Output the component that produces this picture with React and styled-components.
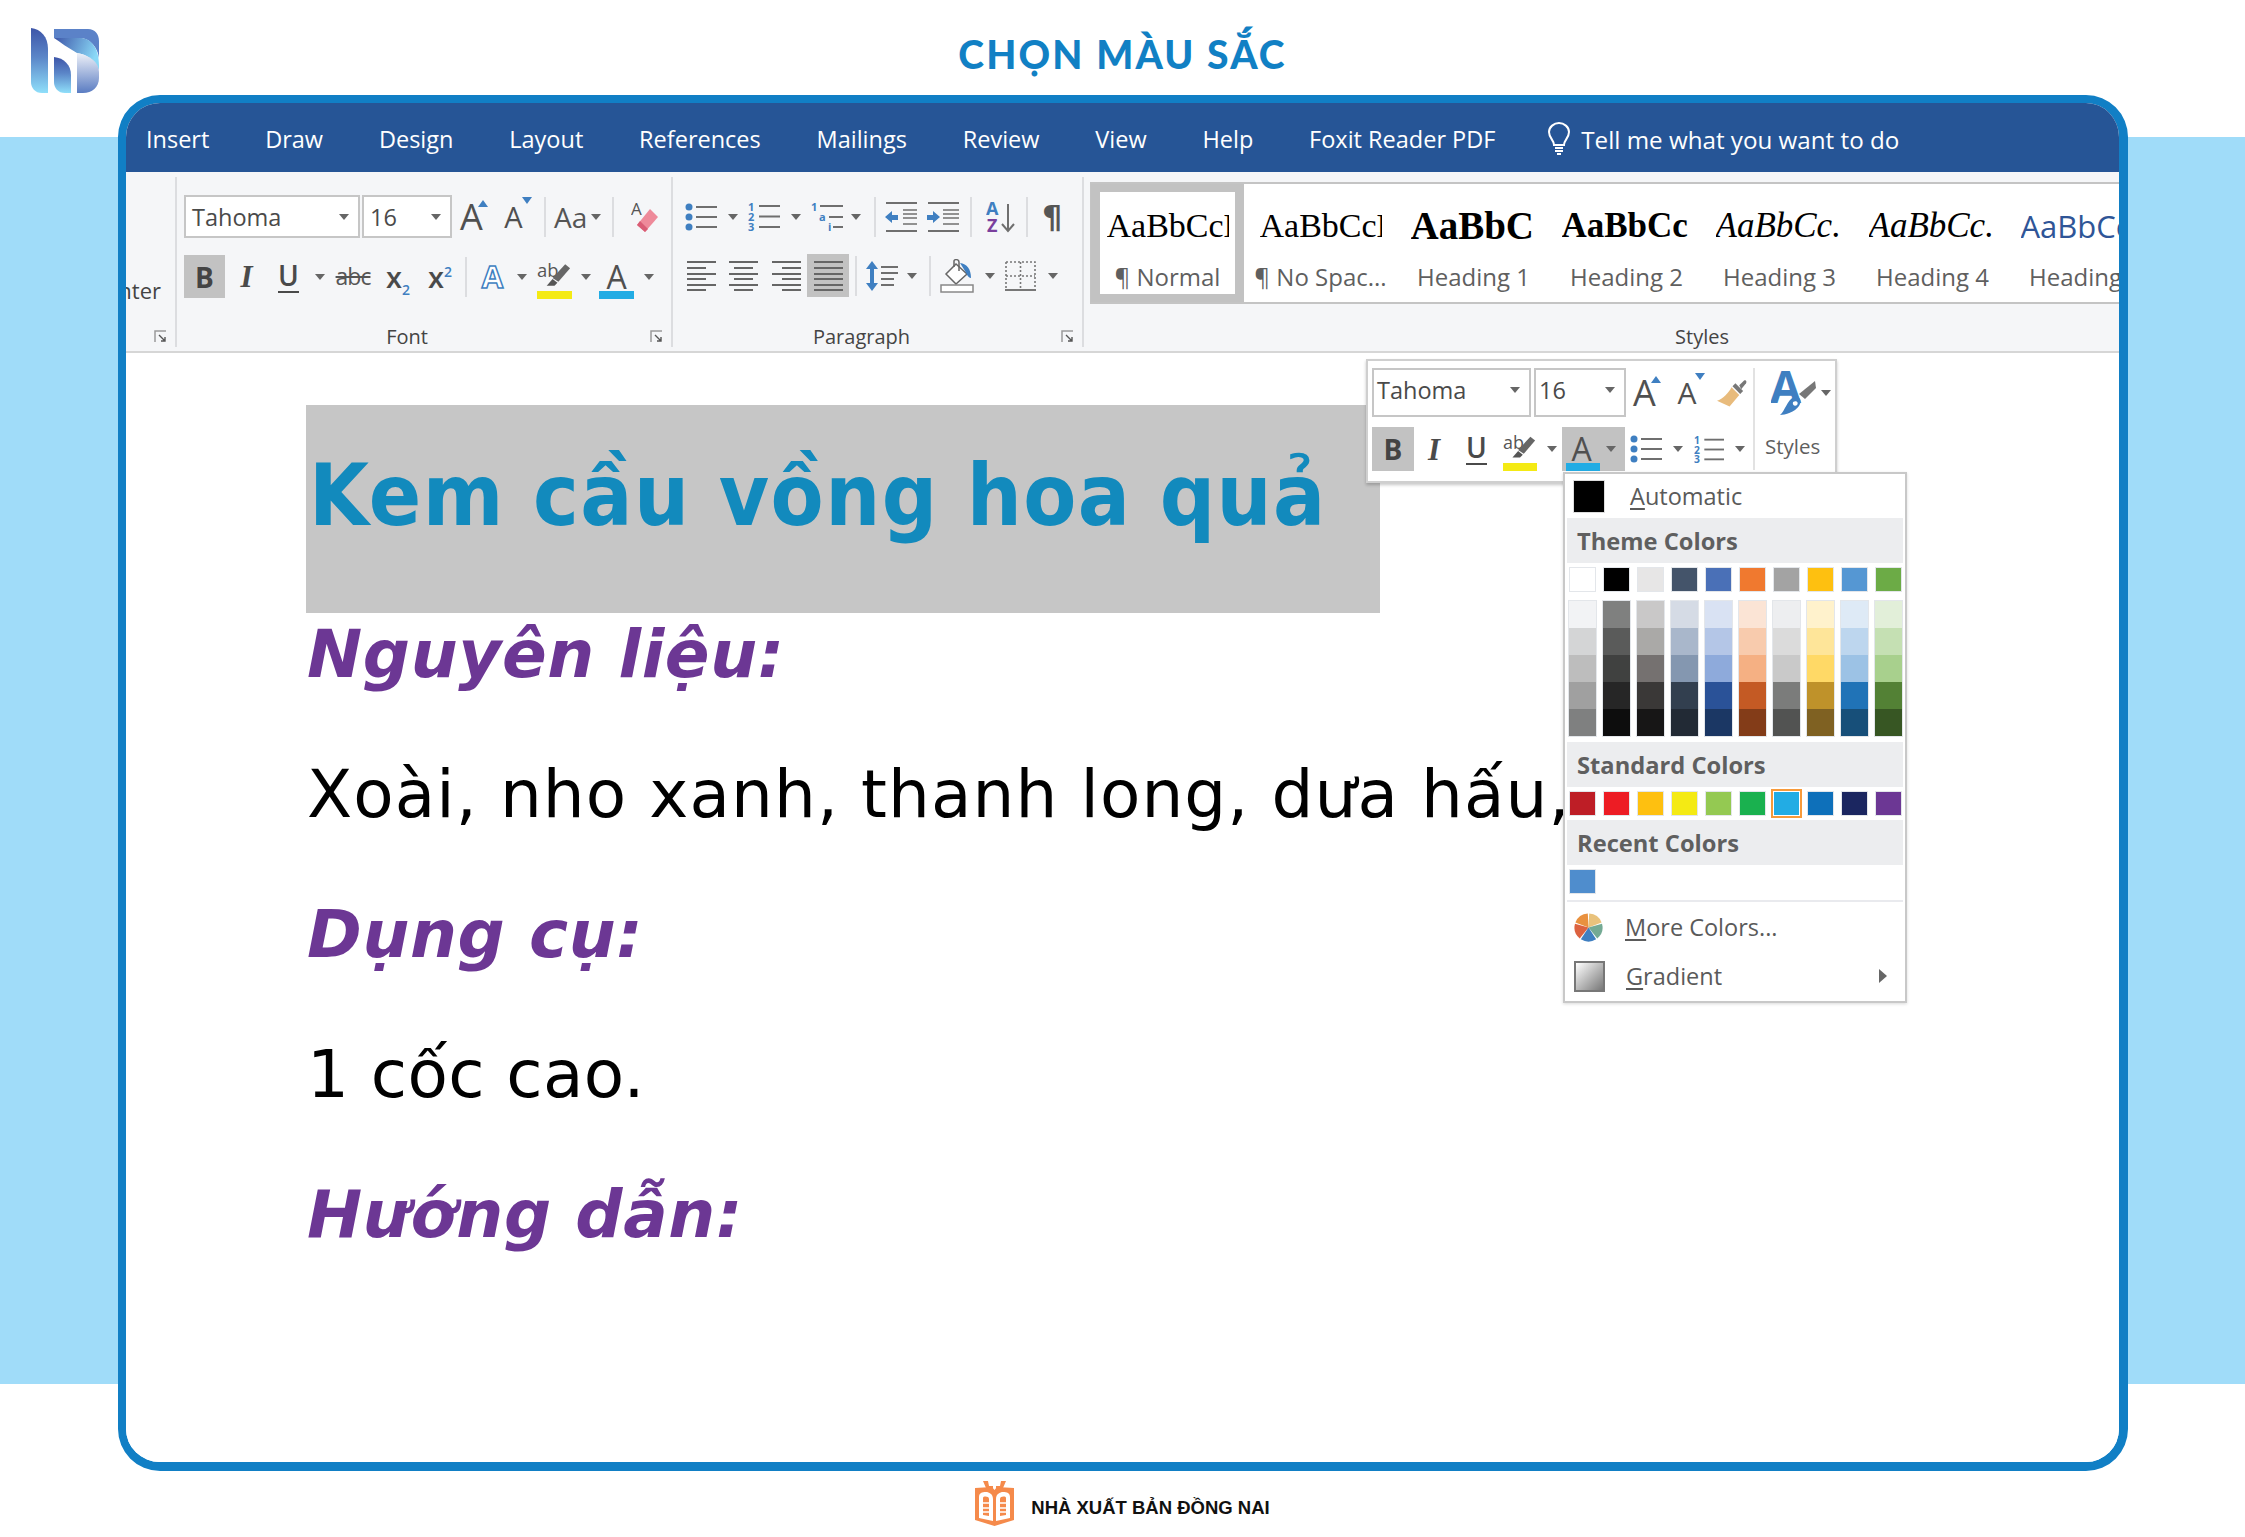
import React from "react"
import styled, { createGlobalStyle } from "styled-components"

const UI = '"Open Sans", "Noto Sans", sans-serif'
const DOC = '"DejaVu Sans", Tahoma, sans-serif'
const SERIF = '"Liberation Serif", serif'
const BLUE = "#3f7fc1"
const GREY = "#6f6f6f"

const Global = createGlobalStyle`
  html, body { margin: 0; padding: 0; background: #fff; }
  * { box-sizing: border-box; }
`

const Page = styled.div`
  width: 2245px;
  height: 1537px;
  overflow: hidden;
  font-family: ${UI};
  background: linear-gradient(#a0dcf9, #a0dcf9) 0 137px / 100% 1247px no-repeat #fff;
`
const Header = styled.header`
  height: 95px;
  display: grid;
  grid-template-columns: 1fr auto 1fr;
`
const LogoWrap = styled.div`
  padding: 28px 0 0 30px;
`
const PageTitle = styled.h1`
  margin: 27px 0 0;
  font: 900 39px/54px Lato, "Noto Sans", sans-serif;
  letter-spacing: 2.2px;
  color: #1180c4;
  white-space: nowrap;
`
const Frame = styled.main`
  margin-left: 118px;
  width: 2010px;
  height: 1376px;
  border: solid #117fc5;
  border-width: 8px 9px 9px 8px;
  border-radius: 42px;
  overflow: hidden;
  background: #fff;
  display: flex;
  flex-direction: column;
`
const Footer = styled.footer`
  height: 66px;
  display: flex;
  justify-content: center;
  align-items: flex-start;
  gap: 17px;
  padding-top: 10px;
`
const PublisherName = styled.span`
  margin-top: 15px;
  font: 700 18.5px/24px "Liberation Sans", sans-serif;
  color: #111;
  white-space: nowrap;
`

const TabBar = styled.nav`
  height: 69px;
  flex: none;
  background: #265596;
  display: flex;
  align-items: center;
  gap: 55.8px;
  padding: 3px 0 0 20px;
`
const Tab = styled.span`
  font-size: 23.5px;
  color: #fff;
  white-space: nowrap;
`
const TellMe = styled.span`
  display: flex;
  align-items: center;
  gap: 9px;
  margin-left: -5px;
  font-size: 24.2px;
  color: #fff;
  white-space: nowrap;
`

const Ribbon = styled.section`
  height: 181px;
  flex: none;
  background: #f5f6f8;
  border-bottom: 2px solid #d6d6d6;
  display: flex;
`
const Group = styled.div`
  position: relative;
  width: ${p => p.$w}px;
  flex: none;
  padding: 23px 0 0 ${p => p.$pad || 0}px;
  display: flex;
  flex-direction: column;
  &::after {
    content: "";
    position: absolute;
    right: 0;
    top: 5px;
    bottom: 4px;
    width: 2px;
    background: #dcdde0;
  }
`
const ClipGroup = styled(Group)`
  overflow: hidden;
  align-items: flex-end;
`
const ClipText = styled.span`
  margin: 80px 16px 0 0;
  font-size: 22px;
  line-height: 30px;
  color: #444;
  white-space: nowrap;
`
const Row = styled.div`
  display: flex;
  align-items: center;
  height: ${p => p.$h}px;
  margin-top: ${p => p.$top || 0}px;
`
const Cell = styled.div`
  width: ${p => p.$w}px;
  height: 100%;
  flex: none;
  margin-left: ${p => p.$ml || 0}px;
  display: flex;
  align-items: center;
  justify-content: center;
  position: relative;
  color: #4d4d4d;
  background: ${p => (p.$on ? "#c2c2c2" : "transparent")};
`
const Divider = styled.i`
  display: block;
  flex: none;
  width: 2px;
  height: 40px;
  margin-left: ${p => p.$ml || 0}px;
  margin-right: ${p => p.$mr || 0}px;
  background: #dcdde0;
`
const Combo = styled.div`
  width: ${p => p.$w}px;
  height: 100%;
  flex: none;
  margin-right: ${p => p.$mr || 0}px;
  padding: 0 9px ${p => p.$up || 0}px ${p => p.$pad || 6}px;
  display: flex;
  align-items: center;
  justify-content: space-between;
  background: #fff;
  border: 2px solid #c6c6c6;
  font-size: 23.5px;
  color: #4a4a4a;
`
const Caret = styled.i`
  display: block;
  flex: none;
  width: 0;
  height: 0;
  margin-left: ${p => p.$ml || 0}px;
  border-left: 5.5px solid transparent;
  border-right: 5.5px solid transparent;
  border-top: 6px solid #666;
`
const Launcher = styled.svg`
  position: absolute;
  right: 10px;
  bottom: 8px;
  width: 13px;
  height: 13px;
`
const GroupLabel = styled.div`
  position: absolute;
  left: 0;
  right: 2px;
  bottom: 0;
  padding-right: ${p => p.$shift || 0}px;
  text-align: center;
  font-size: 20px;
  line-height: 28px;
  color: #444;
`

const BoldB = styled.span`
  font: 700 28px/1 ${UI};
  color: #444;
`
const ItalicI = styled.span`
  font: italic 700 31px/1 ${SERIF};
  color: #4a4a4a;
`
const UnderU = styled.span`
  font: 600 28px/28px ${UI};
  color: #4a4a4a;
  border-bottom: 2px solid #4a4a4a;
  height: 32px;
`
const Strike = styled.span`
  font: 400 23px/1 ${UI};
  letter-spacing: -1px;
  color: #555;
  text-decoration: line-through;
`
const Script = styled.span`
  font: 600 29px/1 ${UI};
  color: #4a4a4a;
  & sub, & sup {
    font-size: 14px;
    line-height: 0;
    color: ${BLUE};
  }
`
const BigA = styled.span`
  font: 500 ${p => p.$s}px/1 ${UI};
  color: #505050;
`
const OutlineA = styled.span`
  font: 700 31px/1 ${UI};
  color: #fff;
  -webkit-text-stroke: 1.5px ${BLUE};
`
const ColorBar = styled.i`
  position: absolute;
  display: block;
  left: ${p => p.$l || 0}px;
  bottom: ${p => p.$b}px;
  width: ${p => p.$w}px;
  height: 8px;
  background: ${p => p.$c};
`
const AaLabel = styled.span`
  font: 400 28px/1 ${UI};
  color: #555;
`
const Pilcrow = styled.span`
  font: 700 32px/1 "DejaVu Sans", sans-serif;
  color: #555;
`

const Gallery = styled.div`
  margin: -13px 0 0 6px;
  height: 122px;
  display: flex;
  background: #fff;
  border: solid #c4c4c4;
  border-width: 2px 0 2px 1px;
  overflow: hidden;
`
const Tile = styled.div`
  width: 153px;
  flex: none;
  height: 100%;
  overflow: hidden;
  border: ${p => (p.$on ? "8px solid #c2c2c2" : "none")};
  border-width: ${p => (p.$on ? "8px 9px" : "0")};
  display: flex;
  flex-direction: column;
  align-items: center;
`
const Sample = styled.div`
  width: ${p => p.$w || 130}px;
  height: 60px;
  margin-top: ${p => (p.$on ? 7 : 15)}px;
  overflow: hidden;
  white-space: nowrap;
  font: ${p => p.$font};
  line-height: 54px;
  color: ${p => p.$c || "#000"};
`
const TileLabel = styled.div`
  margin-top: 3px;
  font-size: 24px;
  line-height: 30px;
  color: #5f5f5f;
  white-space: nowrap;
`

const DocArea = styled.div`
  position: relative;
  flex: 1;
  padding: 52px 0 0 180px;
  background: #fff;
`
const Selected = styled.h2`
  margin: 0 0 2px;
  width: 1074px;
  height: 208px;
  padding-left: 3px;
  background: #c6c6c6;
  font: 700 86px/180px "DejaVu Sans Condensed", ${DOC};
  letter-spacing: 1.4px;
  color: #128abd;
  white-space: nowrap;
`
const DocHeading = styled.h3`
  margin: 0 0 60px;
  padding-left: 1px;
  font: italic 700 66px/80px ${DOC};
  letter-spacing: 0.6px;
  color: #6c3794;
  white-space: nowrap;
`
const DocText = styled.p`
  margin: 0 0 60px;
  padding-left: 1px;
  font: 400 66px/80px ${DOC};
  letter-spacing: ${p => p.$ls}px;
  color: #000;
  white-space: nowrap;
`

const MiniBar = styled.div`
  position: absolute;
  left: 1240px;
  top: 6px;
  width: 471px;
  height: 124px;
  background: #fff;
  border: 2px solid #cfcfcf;
  box-shadow: 0 2px 3px rgba(0, 0, 0, 0.22);
  padding: 7px 0 0 4px;
  display: flex;
`
const MiniRows = styled.div`
  width: 383px;
  flex: none;
  border-right: 2px solid #e2e2e2;
  margin-bottom: 11px;
`
const MiniStyles = styled.div`
  flex: 1;
  display: flex;
  flex-direction: column;
  padding-left: 10px;
`
const MiniLabel = styled.div`
  margin-top: 13px;
  font-size: 20.5px;
  line-height: 30px;
  color: #5f5f5f;
`

const Menu = styled.div`
  position: absolute;
  left: 1437px;
  top: 119px;
  width: 344px;
  height: 531px;
  background: #fff;
  border: 2px solid #c8c8c8;
  box-shadow: 0 1px 3px rgba(0, 0, 0, 0.15);
  padding: 0 2px;
`
const MenuItem = styled.div`
  display: flex;
  align-items: center;
  height: ${p => p.$h}px;
  padding-left: ${p => p.$pad}px;
  font-size: 23.5px;
  color: #5a5a5a;
  position: relative;
`
const Ink = styled.i`
  display: block;
  flex: none;
  width: 32px;
  height: 33px;
  background: #000;
  border: 1px solid #ddd;
  margin-right: 25px;
`
const KeyU = styled.span`
  text-decoration: underline;
  text-underline-offset: 3px;
`
const MenuHead = styled.div`
  height: 45px;
  padding-left: 10px;
  background: #ecedef;
  font: 700 23.7px/47px ${UI};
  color: #5f5f5f;
`
const SwatchRow = styled.div`
  display: flex;
  gap: 7px;
  padding: 4px 0 4px 2px;
`
const Swatch = styled.i`
  display: block;
  width: 27px;
  height: 25px;
  flex: none;
  background: ${p => p.$c};
  outline: 1px solid ${p => (p.$sel ? "transparent" : "#e3e6ea")};
  outline-offset: -1px;
  ${p => p.$sel && "box-shadow: 0 0 0 2px #f79a3a, inset 0 0 0 1px #fff;"}
`
const TintGrid = styled.div`
  display: flex;
  gap: 7px;
  padding: 5px 0 6px 2px;
`
const TintCol = styled.div`
  width: 27px;
  flex: none;
  outline: 1px solid #e3e6ea;
`
const Tint = styled.i`
  display: block;
  height: 27px;
  background: ${p => p.$c};
`
const MenuRule = styled.div`
  height: 2px;
  margin-top: 2px;
  background: #e9eaee;
`
const GradientBox = styled.i`
  display: block;
  flex: none;
  width: 31px;
  height: 31px;
  margin-right: 21px;
  border: 2px solid #777;
  background: linear-gradient(135deg, #fff, #777);
`
const SubArrow = styled.i`
  position: absolute;
  right: 16px;
  top: 50%;
  margin-top: -7px;
  border-top: 7px solid transparent;
  border-bottom: 7px solid transparent;
  border-left: 8px solid #666;
`

// icons
const Hr = ({ y, x1, x2, c = GREY, w = 2 }) => <line x1={x1} x2={x2} y1={y} y2={y} stroke={c} strokeWidth={w} />

const Logo = () => (
  <svg width="70" height="66" viewBox="0 0 70 66">
    <defs>
      <linearGradient id="lg1" x1="0" y1="0" x2="0" y2="1">
        <stop offset="0" stopColor="#3d55a8" />
        <stop offset="0.45" stopColor="#5b86c8" />
        <stop offset="1" stopColor="#8fdffa" />
      </linearGradient>
      <linearGradient id="lg2" x1="0" y1="0" x2="1" y2="0.3">
        <stop offset="0" stopColor="#3d55a8" />
        <stop offset="1" stopColor="#8ad9f7" />
      </linearGradient>
      <linearGradient id="lg3" x1="0" y1="0" x2="0" y2="1">
        <stop offset="0" stopColor="#eef1f8" />
        <stop offset="1" stopColor="#5a7cc2" />
      </linearGradient>
    </defs>
    <path d="M1 0C11 1 18 9 18 21V65H12C5 65 1 60 1 54Z" fill="url(#lg1)" />
    <path d="M24 29C34 30 41 37 41 47V65H35C28 65 24 60 24 54Z" fill="url(#lg1)" />
    <path d="M24 1H58C65 1 69 6 69 13V30C68 20 60 10 50 10H24Z" fill="#5b82c8" />
    <path d="M24 10H50C61 10 69 20 69 37V42C65 33 57 26 47 25C38 20 30 14 24 10Z" fill="url(#lg2)" />
    <path d="M47 25C59 27 69 34 69 44V50C69 59 62 65 53 65H47Z" fill="url(#lg3)" />
  </svg>
)

const PublisherMark = () => (
  <svg width="39" height="45" viewBox="0 0 39 45">
    <path d="M8 0L13 0 14 5 18 5 18 7 11 7ZM31 0L26 0 25 5 21 5 21 7 28 7Z" fill="#f58a4b" />
    <path d="M0 7L17 6 19.5 9 22 6 39 7V39L19.5 45 0 39Z" fill="#f58a4b" />
    <path d="M4 13V37L18 40V18C18 13 14 11 11 11 7 11 4 12 4 16Z" fill="#fff" />
    <path d="M35 13V37L21 40V18C21 13 25 11 28 11 32 11 35 12 35 16Z" fill="#fff" />
    <path d="M8 17C8 15 14 15 14 18V35L8 34ZM25 18C25 15 31 15 31 17V34L25 35Z" fill="#f58a4b" />
    <path d="M8 22H14M8 27H14M8 31H14M25 22H31M25 27H31M25 31H31" stroke="#fff" strokeWidth="1.4" />
  </svg>
)

const Bulb = () => (
  <svg width="26" height="34" viewBox="0 0 26 34" fill="none" stroke="#fff" strokeWidth="2">
    <path d="M8 23C8 18 3 16 3 10 3 5 8 1 13 1S23 5 23 10C23 16 18 18 18 23Z" />
    <path d="M9 26H17M9 29H17M11 32H15" />
  </svg>
)

const LauncherIcon = () => (
  <Launcher viewBox="0 0 13 13" fill="none">
    <path d="M12 1H1V12" stroke="#9a9a9a" strokeWidth="1.5" />
    <path d="M5 5L11 11M11 7V11H7" stroke="#555" strokeWidth="1.4" />
  </Launcher>
)

const Triangle = ({ down, style }) => (
  <svg width="10" height="7" viewBox="0 0 10 7" style={{ position: "absolute", ...style }}>
    <path d={down ? "M0 0H10L5 7Z" : "M0 7H10L5 0Z"} fill={BLUE} />
  </svg>
)

const Eraser = () => (
  <svg width="28" height="34" viewBox="0 0 28 34">
    <text x="0" y="15" fontSize="17" fontFamily="Open Sans" fill="#555">A</text>
    <path d="M19 9L27 17 14 32 6 25Z" fill="#ee8a9a" />
    <path d="M9 21L17 29 14 32 6 25Z" fill="#d95d75" />
  </svg>
)

const Pen = ({ w = 36, h = 34 }) => (
  <svg width={w} height={h} viewBox="0 0 36 30">
    <text x="0" y="15" fontSize="19" fontFamily="Open Sans" fill="#555">ab</text>
    <path d="M29 2L34 6 22 20 16 16Z" fill="#666" />
    <path d="M16 17L21 21 18 24 10 24Z" fill="#555" />
  </svg>
)

const Bullets = () => (
  <svg width="32" height="28" viewBox="0 0 32 28">
    {[4, 14, 24].map(y => (
      <g key={y}>
        <circle cx="4" cy={y} r="3.5" fill={BLUE} />
        <Hr y={y} x1={11} x2={32} />
      </g>
    ))}
  </svg>
)

const Numbers = () => (
  <svg width="32" height="29" viewBox="0 0 32 29">
    {["1", "2", "3"].map((n, i) => (
      <g key={n}>
        <text x="0" y={9 + i * 10} fontSize="11" fontWeight="700" fontFamily="Open Sans" fill={BLUE}>{n}</text>
        <Hr y={4 + i * 10.5} x1={11} x2={32} />
      </g>
    ))}
  </svg>
)

const Multilevel = () => (
  <svg width="32" height="29" viewBox="0 0 32 29">
    <text x="0" y="9" fontSize="11" fontWeight="700" fontFamily="Open Sans" fill={BLUE}>1</text>
    <text x="8" y="19" fontSize="11" fontWeight="700" fontFamily="Open Sans" fill={BLUE}>a</text>
    <text x="17" y="29" fontSize="11" fontWeight="700" fontFamily="Open Sans" fill={BLUE}>i</text>
    <Hr y={4} x1={9} x2={32} />
    <Hr y={15} x1={18} x2={32} />
    <Hr y={25} x1={22} x2={32} />
  </svg>
)

const IndentIcon = ({ out }) => (
  <svg width="32" height="30" viewBox="0 0 32 30">
    <Hr y={1} x1={1} x2={32} />
    <Hr y={29} x1={1} x2={32} />
    {[8, 12, 16, 22].map(y => <Hr key={y} y={y} x1={out ? 18 : 16} x2={32} w={1.6} />)}
    {out
      ? <path d="M0 15L7 9V13H13V18H7V21Z" fill={BLUE} />
      : <path d="M13 15L6 9V13H0V18H6V21Z" fill={BLUE} />}
  </svg>
)

const SortIcon = () => (
  <svg width="29" height="32" viewBox="0 0 29 32">
    <text x="0" y="14" fontSize="18" fontWeight="700" fontFamily="Open Sans" fill={BLUE}>A</text>
    <text x="1" y="31" fontSize="18" fontWeight="700" fontFamily="Open Sans" fill="#7a3f9d">Z</text>
    <path d="M22 3V29M16 23L22 30 28 23" stroke={GREY} strokeWidth="2" fill="none" />
  </svg>
)

const AlignIcon = ({ mode }) => {
  const ys = [1, 7, 13, 18, 24, 29]
  const shorts = [0, 1, 0, 1, 0, 1]
  return (
    <svg width="29" height="30" viewBox="0 0 29 30">
      {ys.map((y, i) => {
        const len = mode === "justify" || !shorts[i] ? 29 : 19
        let x1 = 0
        if (mode === "center") x1 = (29 - len) / 2
        if (mode === "right") x1 = 29 - len
        return <Hr key={y} y={y} x1={x1} x2={x1 + len} c="#666" />
      })}
    </svg>
  )
}

const LineSpacing = () => (
  <svg width="32" height="32" viewBox="0 0 32 32">
    <path d="M6 1L12 9H8V23H12L6 31 0 23H4V9H0Z" fill={BLUE} />
    <Hr y={7} x1={15} x2={32} />
    <Hr y={13} x1={15} x2={32} />
    <Hr y={19} x1={15} x2={28} />
    <Hr y={25} x1={15} x2={28} />
  </svg>
)

const Shading = () => (
  <svg width="34" height="34" viewBox="0 0 34 34">
    <path d="M16 5L27 15 16 25 6 15Z" fill="#fff" stroke="#666" strokeWidth="1.5" />
    <path d="M14 8V2C14 0 19 0 19 3V12" fill="none" stroke="#666" strokeWidth="1.5" />
    <path d="M20 4C27 5 31 10 31 19 28 19 27 15 25 12Z" fill={BLUE} />
    <rect x="1" y="26" width="32" height="7" fill="#fff" stroke="#888" strokeWidth="1.5" />
  </svg>
)

const Borders = () => (
  <svg width="31" height="30" viewBox="0 0 31 30" fill="none" stroke="#777" strokeWidth="1.6">
    <path d="M1 1H30V29M1 1V29M15.5 1V29M1 15H30" strokeDasharray="2 2" />
    <path d="M0 29H31" strokeWidth="2" />
  </svg>
)

const Brush = () => (
  <svg width="31" height="28" viewBox="0 0 31 28">
    <path d="M23 6L28 1C30 0 31 2 30 4L25 10Z" fill="#777" />
    <path d="M19 4L27 12 24 15 16 7Z" fill="#777" />
    <path d="M15 8L23 16 13 28 0 22C6 20 12 14 15 8Z" fill="#e8bb7c" />
  </svg>
)

const StylesA = () => (
  <svg width="46" height="46" viewBox="0 0 46 46">
    <text x="-1" y="33" fontSize="45" fontWeight="700" fontFamily="Open Sans" fill={BLUE}>A</text>
    <path d="M44 11L45 18 34 29 28 24Z" fill="#777" />
    <path d="M23 27C28 26 32 30 28 36 24 42 14 45 9 45 14 41 16 30 23 27Z" fill={BLUE} />
    <path d="M22 32C25 30 28 32 26 35 24 37 21 35 22 32Z" fill="#fff" />
  </svg>
)

const wedge = (a0, a1) => {
  const pt = a => [14.5 + 14 * Math.sin(a), 14.5 - 14 * Math.cos(a)]
  const [x0, y0] = pt(a0)
  const [x1, y1] = pt(a1)
  return `M14.5 14.5L${x0.toFixed(2)} ${y0.toFixed(2)}A14 14 0 0 1 ${x1.toFixed(2)} ${y1.toFixed(2)}Z`
}
const Pie = () => {
  const colors = ["#e9c27c", "#74aa94", "#3f7fc1", "#dc6240", "#e9913f"]
  const step = (Math.PI * 2) / 5
  return (
    <svg width="29" height="29" viewBox="0 0 29 29" style={{ marginRight: 22 }}>
      {colors.map((c, i) => (
        <path key={c} d={wedge(i * step + 0.05, (i + 1) * step - 0.05)} fill={c} />
      ))}
    </svg>
  )
}

const THEME = [
  ["#ffffff", "#f2f3f5", "#d4d5d6", "#bdbdbd", "#a0a0a0", "#7f8080"],
  ["#000000", "#7f807f", "#5a5b5a", "#404140", "#262626", "#0d0d0d"],
  ["#e7e6e6", "#c9c8c8", "#aaa9a7", "#757170", "#3a3837", "#171616"],
  ["#44546a", "#d5dbe5", "#a9b7cb", "#8497b0", "#323f4f", "#222a35"],
  ["#4a70b7", "#d9e2f3", "#b4c6e7", "#8eaadb", "#2a5298", "#1b3764"],
  ["#f0792f", "#fbe4d5", "#f8cbad", "#f5b083", "#c45a24", "#833c18"],
  ["#a3a3a3", "#edeef0", "#dbdbdb", "#c9c9c9", "#7b7c7b", "#525352"],
  ["#fec010", "#fff2cc", "#fee599", "#ffd966", "#bf922a", "#7f6122"],
  ["#5597d3", "#deeaf6", "#bdd6ee", "#9cc2e5", "#2073b7", "#174f79"],
  ["#6cab46", "#e2efd9", "#c5e0b3", "#a8d08d", "#538135", "#375623"],
]
const STANDARD = ["#be1e26", "#ed1c24", "#fec010", "#f4ea14", "#94c952", "#1ab14f", "#22ace4", "#0e70ba", "#1b2660", "#6c3794"]

const TABS = ["Insert", "Draw", "Design", "Layout", "References", "Mailings", "Review", "View", "Help", "Foxit Reader PDF"]

const TILES = [
  { label: "¶ Normal", text: "AaBbCcDd", font: `400 34px ${SERIF}`, on: true, w: 122 },
  { label: "¶ No Spac...", text: "AaBbCcDd", font: `400 34px ${SERIF}`, w: 122 },
  { label: "Heading 1", text: "AaBbC", font: `700 39px ${SERIF}`, w: 126 },
  { label: "Heading 2", text: "AaBbCc", font: `700 35px ${SERIF}`, w: 130 },
  { label: "Heading 3", text: "AaBbCc.", font: `italic 400 35px ${SERIF}`, w: 128 },
  { label: "Heading 4", text: "AaBbCc.", font: `italic 400 35px ${SERIF}`, w: 128 },
  { label: "Heading 5", text: "AaBbCc", font: `400 31px ${UI}`, c: "#2f5597", w: 130 },
]

const App = () => (
  <Page>
    <Global />
    <Header>
      <LogoWrap><Logo /></LogoWrap>
      <PageTitle>CHỌN MÀU SẮC</PageTitle>
    </Header>

    <Frame>
      <TabBar>
        {TABS.map(t => <Tab key={t}>{t}</Tab>)}
        <TellMe><Bulb />Tell me what you want to do</TellMe>
      </TabBar>

      <Ribbon>
        <ClipGroup $w={51}>
          <ClipText>Format Painter</ClipText>
          <LauncherIcon />
        </ClipGroup>

        <Group $w={496} $pad={7}>
          <Row $h={43}>
            <Combo $w={176} $mr={2}>Tahoma<Caret /></Combo>
            <Combo $w={90} $mr={6}>16<Caret /></Combo>
            <Cell $w={27}>
              <BigA $s={36}>A</BigA>
              <Triangle style={{ right: -3, top: 5 }} />
            </Cell>
            <Cell $w={27} $ml={15}>
              <BigA $s={29}>A</BigA>
              <Triangle down style={{ right: -5, top: 2 }} />
            </Cell>
            <Divider $ml={17} $mr={8} />
            <AaLabel>Aa</AaLabel>
            <Caret $ml={4} />
            <Divider $ml={11} $mr={17} />
            <Eraser />
          </Row>
          <Row $h={43} $top={17}>
            <Cell $w={41} $on><BoldB>B</BoldB></Cell>
            <Cell $w={15} $ml={14}><ItalicI>I</ItalicI></Cell>
            <Cell $w={19} $ml={25}><UnderU>U</UnderU></Cell>
            <Caret $ml={17} />
            <Cell $w={34} $ml={11}><Strike>abc</Strike></Cell>
            <Cell $w={26} $ml={15}><Script>x<sub>2</sub></Script></Cell>
            <Cell $w={28} $ml={15}><Script>x<sup>2</sup></Script></Cell>
            <Divider $ml={11} $mr={13} />
            <Cell $w={25}><OutlineA>A</OutlineA></Cell>
            <Caret $ml={12} />
            <Cell $w={35} $ml={10}><Pen /><ColorBar $w={35} $b={-1} $c="#f4ea14" /></Cell>
            <Caret $ml={9} />
            <Cell $w={35} $ml={8}><BigA $s={32}>A</BigA><ColorBar $w={35} $b={-1} $c="#22ace4" /></Cell>
            <Caret $ml={10} />
          </Row>
          <GroupLabel $shift={34}>Font</GroupLabel>
          <LauncherIcon />
        </Group>

        <Group $w={411} $pad={12}>
          <Row $h={43}>
            <Bullets />
            <Caret $ml={11} />
            <Cell $w={32} $ml={10}><Numbers /></Cell>
            <Caret $ml={11} />
            <Cell $w={32} $ml={10}><Multilevel /></Cell>
            <Caret $ml={8} />
            <Divider $ml={13} $mr={9} />
            <IndentIcon out />
            <Cell $w={32} $ml={10}><IndentIcon /></Cell>
            <Divider $ml={11} $mr={14} />
            <SortIcon />
            <Divider $ml={11} $mr={14} />
            <Pilcrow>¶</Pilcrow>
          </Row>
          <Row $h={43} $top={16}>
            <Cell $w={29} $ml={2}><AlignIcon mode="left" /></Cell>
            <Cell $w={29} $ml={13}><AlignIcon mode="center" /></Cell>
            <Cell $w={29} $ml={14}><AlignIcon mode="right" /></Cell>
            <Cell $w={42} $ml={6} $on><AlignIcon mode="justify" /></Cell>
            <Divider $ml={6} $mr={9} />
            <LineSpacing />
            <Caret $ml={9} />
            <Divider $ml={12} $mr={9} />
            <Shading />
            <Caret $ml={11} />
            <Cell $w={31} $ml={10}><Borders /></Cell>
            <Caret $ml={12} />
          </Row>
          <GroupLabel $shift={32}>Paragraph</GroupLabel>
          <LauncherIcon />
        </Group>

        <Group $w={1238}>
          <Gallery>
            {TILES.map(t => (
              <Tile key={t.label} $on={t.on}>
                <Sample $font={t.font} $c={t.c} $w={t.w} $on={t.on}>{t.text}</Sample>
                <TileLabel>{t.label}</TileLabel>
              </Tile>
            ))}
          </Gallery>
          <GroupLabel>Styles</GroupLabel>
        </Group>
      </Ribbon>

      <DocArea>
        <Selected>Kem cầu vồng hoa quả</Selected>
        <DocHeading>Nguyên liệu:</DocHeading>
        <DocText $ls={1.1}>Xoài, nho xanh, thanh long, dưa hấu,</DocText>
        <DocHeading>Dụng cụ:</DocHeading>
        <DocText $ls={0.4}>1 cốc cao.</DocText>
        <DocHeading>Hướng dẫn:</DocHeading>

        <MiniBar>
          <MiniRows>
            <Row $h={49}>
              <Combo $w={159} $mr={3} $pad={3} $up={5}>Tahoma<Caret /></Combo>
              <Combo $w={92} $pad={3} $up={5}>16<Caret /></Combo>
              <Cell $w={27} $ml={5}>
                <BigA $s={36}>A</BigA>
                <Triangle style={{ right: -3, top: 8 }} />
              </Cell>
              <Cell $w={26} $ml={16}>
                <BigA $s={30}>A</BigA>
                <Triangle down style={{ right: -5, top: 5 }} />
              </Cell>
              <Cell $w={30} $ml={17}><Brush /></Cell>
            </Row>
            <Row $h={44} $top={10}>
              <Cell $w={42} $on><BoldB>B</BoldB></Cell>
              <Cell $w={16} $ml={12}><ItalicI>I</ItalicI></Cell>
              <Cell $w={19} $ml={25}><UnderU>U</UnderU></Cell>
              <Cell $w={34} $ml={17}><Pen /><ColorBar $w={34} $b={0} $c="#f4ea14" /></Cell>
              <Caret $ml={10} />
              <Cell $w={63} $ml={5} $on>
                <BigA $s={32}>A</BigA>
                <Caret $ml={14} />
                <ColorBar $l={4} $w={34} $b={0} $c="#22ace4" />
              </Cell>
              <Cell $w={32} $ml={5}><Bullets /></Cell>
              <Caret $ml={11} />
              <Cell $w={30} $ml={11}><Numbers /></Cell>
              <Caret $ml={11} />
            </Row>
          </MiniRows>
          <MiniStyles>
            <Row $h={50}>
              <Cell $w={46} $ml={6}><StylesA /></Cell>
              <Caret $ml={4} />
            </Row>
            <MiniLabel>Styles</MiniLabel>
          </MiniStyles>
        </MiniBar>

        <Menu>
          <MenuItem $h={44} $pad={6}>
            <Ink />
            <span><KeyU>A</KeyU>utomatic</span>
          </MenuItem>
          <MenuHead>Theme Colors</MenuHead>
          <SwatchRow>
            {THEME.map(col => <Swatch key={col[0]} $c={col[0]} />)}
          </SwatchRow>
          <TintGrid>
            {THEME.map(col => (
              <TintCol key={col[0]}>
                {col.slice(1).map(c => <Tint key={c} $c={c} />)}
              </TintCol>
            ))}
          </TintGrid>
          <MenuHead>Standard Colors</MenuHead>
          <SwatchRow>
            {STANDARD.map((c, i) => <Swatch key={c} $c={c} $sel={i === 6} />)}
          </SwatchRow>
          <MenuHead>Recent Colors</MenuHead>
          <SwatchRow>
            <Swatch $c="#4f8dcd" />
          </SwatchRow>
          <MenuRule />
          <MenuItem $h={50} $pad={7}>
            <Pie />
            <span><KeyU>M</KeyU>ore Colors...</span>
          </MenuItem>
          <MenuItem $h={48} $pad={7}>
            <GradientBox />
            <span><KeyU>G</KeyU>radient</span>
            <SubArrow />
          </MenuItem>
        </Menu>
      </DocArea>
    </Frame>

    <Footer>
      <PublisherMark />
      <PublisherName>NHÀ XUẤT BẢN ĐỒNG NAI</PublisherName>
    </Footer>
  </Page>
)

export default App
